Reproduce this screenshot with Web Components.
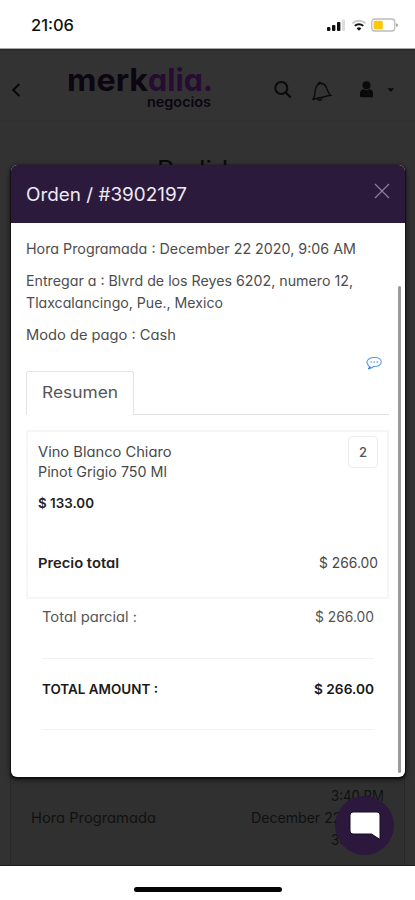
<!DOCTYPE html>
<html lang="es"><head><meta charset="utf-8"><title>Orden</title>
<style>
html,body{margin:0;height:100%;background:#fff;overflow:hidden}
body{font-family:Inter,"Open Sans",sans-serif;font-feature-settings:"cv11";color:#3b3b3b}
</style></head><body>
<order-screen></order-screen>
<script>
const define=(name,html,init)=>customElements.define(name,class extends HTMLElement{
  constructor(){super();this.attachShadow({mode:'open'}).innerHTML=html;}
  connectedCallback(){if(init)init.call(this,this.shadowRoot);}
});

// A single line whose letters are widened to fill the width in its "w" attribute.
define('line-text',`<style>
:host{display:block;white-space:nowrap;flex:none}
span{display:inline-block;white-space:pre;transform-origin:0 50%;vertical-align:top}
</style><span></span>`,function(root){
  const s=root.querySelector('span');
  s.textContent=this.getAttribute('text');
  const w=+this.getAttribute('w');
  this.style.width=w+'px';
  s.style.transform='scaleX('+(w/s.getBoundingClientRect().width).toFixed(4)+')';
});

define('status-bar',`<style>
:host{display:flex;height:49px;box-sizing:border-box;padding:2px 16px 0 31px;align-items:center;justify-content:space-between;background:#fff;color:#111;font-size:15.5px;font-weight:500;border-bottom:1px solid #a5a5a5}
svg{display:block}
</style><line-text text="21:06" w="43"></line-text>
<svg width="73" height="16" viewBox="0 0 73 16">
<g fill="#111"><rect x="1" y="10" width="3.4" height="4" rx="1"/><rect x="6" y="8" width="3.4" height="6" rx="1"/><rect x="11" y="5" width="3.4" height="9" rx="1"/></g>
<rect x="16" y="2.500" width="3" height="11.500" rx="1" fill="#ddd"/>
<g fill="none" stroke-width="2"><path d="M26.4 6.4a9.3 9.3 0 0 1 13.2 0" stroke="#c9c9c9"/><path d="M28.8 8.9a5.9 5.9 0 0 1 8.4 0" stroke="#111"/></g><path d="M30.7 11.4a3.4 3.4 0 0 1 4.6 0L33 13.8z" fill="#111"/>
<rect x="45.8" y="2" width="23" height="12" rx="3" fill="#fff" stroke="#bcbcbc" stroke-width="1.300"/><rect x="47.6" y="3.8" width="9.2" height="8.4" rx="1.2" fill="#fdc70c"/><path d="M70 6.2q2.2.4 2.2 1.9T70 10z" fill="#aaa"/></svg>`);

define('brand-logo',`<style>
:host{display:block;width:147px;color:#0b0610;font-family:Inter,sans-serif}
.a{display:flex;height:30px;line-height:30px;font-size:31px;font-weight:700}
.p{color:#260b32}.b{display:flex;justify-content:flex-end;font-size:13.5px;line-height:14px;font-weight:600;padding-right:2px}
</style><div class="a"><line-text text="merk" w="81"></line-text><line-text class="p" text="alia." w="65"></line-text></div>
<div class="b"><line-text text="negocios" w="64"></line-text></div>`);

define('app-header',`<style>
:host{display:flex;box-sizing:border-box;height:70px;padding:0 19px 0 11px;background:#333;align-items:center;border-bottom:1px solid #303030}
svg{display:block;flex:none}.back{margin-right:46px;margin-top:8px}brand-logo{margin-top:3px}.tools{margin-left:61px;margin-top:8px}
</style><svg class="back" width="10" height="16" viewBox="0 0 10 16"><path d="M8.4 2 2.2 8l6.2 6" fill="none" stroke="#080808" stroke-width="2"/></svg>
<brand-logo></brand-logo>
<svg class="tools" width="124" height="26" viewBox="0 0 124 26" fill="none" stroke="#0a0a0a">
<circle cx="7.300" cy="11" r="6" stroke-width="2"/><path d="m11.800 15.500 5 5" stroke-width="2.400"/>
<path d="M38.500 22.500c3-2.600 2.200-6.500 2.900-10 .7-3.200 2.300-5.200 4.500-5.800 2.500-.6 5 .5 6.300 3.200 1.700 3.500 1.300 6.300 4.600 8.300z" stroke-width="1.300"/><path d="M44.300 6.900c.1-1.600 2-1.900 2.600-.5M43.500 22.200c1.200 1.700 4.200 1.200 4.400-.8" stroke-width="1.400"/>
<g fill="#0a0a0a" stroke="none"><circle cx="92.500" cy="8.200" r="4"/><path d="M86 19v-2.500c0-2.700 1.500-4.300 3.900-4.300 1.600 1.200 3.800 1.200 5.200 0 2.600 0 4 1.700 4 4.300V19q0 1.200-1.500 1.200H87.500Q86 20.200 86 19z"/><path d="M113.400 11.200h6.800l-3.400 3.800z"/></g></svg>`);

define('history-row',`<style>
:host{display:flex;box-sizing:border-box;width:395px;height:88px;margin-left:10px;padding:8px 20px 0 21px;border:solid #292929;border-width:0 1px;background:#303030;color:#101010;font-size:14px;line-height:22px;justify-content:space-between}
.l{padding-top:22px;margin-left:-1px}.r{display:flex;flex-direction:column;align-items:flex-end}
</style><div class="l"><line-text text="Hora Programada" w="125"></line-text></div>
<div class="r"><line-text text="3:40 PM" w="53"></line-text><line-text text="December 22 2020," w="133"></line-text><line-text text="3:40 PM" w="53"></line-text></div>`);

define('chat-button',`<style>
:host{display:block;width:59px;height:59px;border-radius:50%;background:#2c183d}
svg{display:block}</style><svg width="59" height="59" viewBox="0 0 59 59"><path d="M18 16h24q3 0 3 3v24.500l-8.500-5.500H18q-3 0-3-3V19q0-3 3-3z" fill="#fff" stroke="#140a1d" stroke-width="1"/></svg>`);

define('modal-header',`<style>
:host{display:flex;box-sizing:border-box;height:58px;padding:0 15px;background:#2c1a3d;color:#efeaf2;font-size:18px;align-items:center;justify-content:space-between}
svg{display:block;margin-top:-7px}</style><line-text text="Orden / #3902197" w="161"></line-text>
<svg width="16" height="16" viewBox="0 0 16 16"><path d="m1 1 14 14M15 1 1 15" stroke="#8c8096" stroke-width="1.200"/></svg>`);

define('tab-strip',`<style>
:host{display:flex;height:44px}
.tab{box-sizing:border-box;width:108px;border:1px solid #e4e4e4;border-bottom:0;border-radius:3px 3px 0 0;padding-left:15px;font-size:15.500px;line-height:42px;color:#555}
.rest{flex:1;border-bottom:1px solid #e0e0e0}
</style><div class="tab"><line-text text="Resumen" w="76"></line-text></div><div class="rest"></div>`);

define('product-card',`<style>
:host{display:block;box-sizing:border-box;height:169px;margin-top:15px;border:2px solid #f6f6f6;padding:10px 9px 0 10px;font-size:14px;line-height:20px;color:#484848}
.row{display:flex;justify-content:space-between}.qty{box-sizing:border-box;width:30px;height:32px;margin:-6px 0 0;border:1px solid #ececec;border-radius:4px;text-align:center;line-height:31px;font-size:13px;color:#555;font-weight:500}
.price{margin-top:11px;font-weight:600;color:#222;font-size:13.500px}.total{margin-top:40px}.total .k{font-weight:600;color:#222;font-size:13.500px}
</style><div class="row"><div><line-text text="Vino Blanco Chiaro" w="133.500"></line-text><line-text text="Pinot Grigio 750 Ml" w="129"></line-text></div><div class="qty">2</div></div>
<line-text class="price" text="$ 133.00" w="56"></line-text>
<div class="row total"><line-text class="k" text="Precio total" w="81"></line-text><line-text text="$ 266.00" w="59"></line-text></div>`);

define('total-row',`<style>
:host{display:flex;box-sizing:border-box;justify-content:space-between;margin:0 15px 0 16px;border-bottom:1px solid #f1f1f1;font-size:14px;line-height:22px;color:#555}
:host([strong]){font-size:13px;font-weight:600;color:#191919}
</style><slot></slot>`);

define('order-modal',`<style>
:host{display:block;width:394px;height:612px;border-radius:6px;background:#fff;overflow:hidden;box-shadow:0 1px 1px 1px #111,0 2px 5px 1px #0008}
.content{display:grid;grid-template-columns:363px auto;padding:15px 0 0 15px;height:539px;column-gap:9px}
.scroll{width:3px;height:487px;margin-top:48px;background:#9b9b9b;border-radius:2px}
.meta{font-size:14px;line-height:22px;color:#4d4d4d}
.meta line-text{margin-bottom:10px}.meta .tight,.meta .last{margin-bottom:0}
.note{display:flex;justify-content:flex-end;box-sizing:border-box;padding:10px 6px 0 0;height:25px}.note svg{display:block}
.sub{height:60px;padding-top:7px;box-sizing:border-box}.sum{height:71px;padding-top:19px;box-sizing:border-box}
</style><modal-header></modal-header><div class="content"><main>
<div class="meta"><line-text text="Hora Programada : December 22 2020, 9:06 AM" w="330"></line-text>
<line-text class="tight" text="Entregar a : Blvrd de los Reyes 6202, numero 12," w="327"></line-text>
<line-text text="Tlaxcalancingo, Pue., Mexico" w="197"></line-text>
<line-text class="last" text="Modo de pago : Cash" w="150"></line-text></div>
<div class="note"><svg width="17" height="15" viewBox="0 0 18 16" fill="none" stroke="#5a9ded" stroke-width="1.200"><path d="M2.600 10.100C-1.200 6.300 2.200 1.800 8.200 1.600c5.600-.3 8 1.900 8 4.800 0 3.200-3.300 5.200-8.200 4.800-1.300 1.400-2.800 2.100-4.800 2.100.8-1.200.8-2.200-.6-3.200z"/><path d="m2.500 14 2.200-2.500" stroke="#3b84e0" stroke-width="1.800"/><g fill="#5a9ded" stroke="none"><circle cx="5.500" cy="6.400" r=".9"/><circle cx="8.700" cy="6.400" r=".9"/><circle cx="11.900" cy="6.400" r=".9"/></g></svg></div>
<tab-strip></tab-strip><product-card></product-card>
<total-row class="sub"><line-text text="Total parcial :" w="95"></line-text><line-text text="$ 266.00" w="59"></line-text></total-row>
<total-row strong class="sum"><line-text text="TOTAL AMOUNT :" w="116"></line-text><line-text text="$ 266.00" w="60"></line-text></total-row>
</main><div class="scroll"></div></div>`);

define('home-bar',`<style>
:host{display:flex;height:34px;box-sizing:border-box;justify-content:center;padding-top:21px;background:#fff}
i{display:block;width:148px;height:5px;border-radius:3px;background:#050505}</style><i></i>`);

define('order-screen',`<style>
:host{display:flex;flex-direction:column;width:415px;height:900px;overflow:hidden}
.page{position:relative;height:817px;box-sizing:border-box;border-top:2px solid #2b2b2b;border-bottom:1px solid #1c1c1c;background:#313231;display:flex;flex-direction:column;overflow:hidden}
.title{display:flex;justify-content:center;font-size:25px;line-height:30px;color:#0a0a0a;margin-top:34px}
history-row{margin-top:auto}
order-modal{position:absolute;left:11px;top:114px}
chat-button{position:absolute;left:335px;top:745px}
</style><status-bar></status-bar><div class="page"><app-header></app-header><div class="title"><line-text text="Pedidos" w="101"></line-text></div><history-row></history-row><order-modal></order-modal><chat-button></chat-button></div><home-bar></home-bar>`);
</script></body></html>
